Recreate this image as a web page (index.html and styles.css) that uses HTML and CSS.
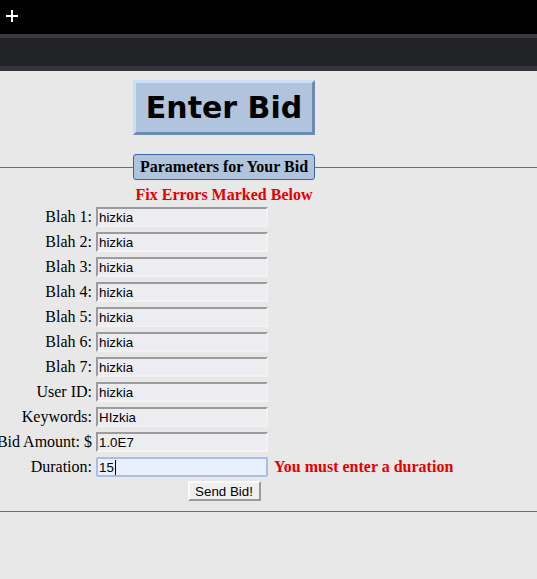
FILE: index.html
```html
<!DOCTYPE html>
<html>
<head>
<meta charset="utf-8">
<title>Enter Bid</title>
<link rel="stylesheet" href="styles.css">
</head>
<body>
<div class="topbar">
  <svg class="plus" width="12" height="12" viewBox="0 0 12 12"><path d="M6 0V12M0 6H12" stroke="#fff" stroke-width="2"/></svg>
</div>
<div class="tabbar"></div>
<main class="page">
  <div class="titlebox">Enter Bid</div>
  <form class="bidform">
    <fieldset class="params">
      <legend class="legend"><span class="legtext">Parameters for Your Bid</span></legend>
      <div class="content">
        <div class="errhead">Fix Errors Marked Below</div>
        <div class="rows">
          <label class="lbl">Blah 1:</label><input class="field" type="text" value="hizkia"><span></span>
          <label class="lbl">Blah 2:</label><input class="field" type="text" value="hizkia"><span></span>
          <label class="lbl">Blah 3:</label><input class="field" type="text" value="hizkia"><span></span>
          <label class="lbl">Blah 4:</label><input class="field" type="text" value="hizkia"><span></span>
          <label class="lbl">Blah 5:</label><input class="field" type="text" value="hizkia"><span></span>
          <label class="lbl">Blah 6:</label><input class="field" type="text" value="hizkia"><span></span>
          <label class="lbl">Blah 7:</label><input class="field" type="text" value="hizkia"><span></span>
          <label class="lbl">User ID:</label><input class="field" type="text" value="hizkia"><span></span>
          <label class="lbl">Keywords:</label><input class="field" type="text" value="HIzkia"><span></span>
          <label class="lbl">Bid Amount: $</label><input class="field" type="text" value="1.0E7"><span></span>
          <label class="lbl">Duration:</label><div class="field focused">15<span class="caret"></span></div><span class="err">You must enter a duration</span>
        </div>
        <div class="actions"><button class="send" type="button">Send Bid!</button></div>
      </div>
    </fieldset>
  </form>
</main>
</body>
</html>
```

FILE: styles.css
```css
html, body {
  margin: 0;
  padding: 0;
  background: #e8e8e8;
  font-family: "Liberation Serif", "Times New Roman", serif;
  font-size: 16px;
  color: #000;
  overflow: hidden;
}

.topbar {
  height: 34px;
  background: #000;
  display: flex;
  align-items: flex-start;
}

.plus {
  margin: 10px 0 0 6px;
  display: block;
}

.tabbar {
  height: 28px;
  background: #222326;
  border-top: 4px solid #3a3a3b;
  border-bottom: 5px solid #35363a;
}

.page {
  padding-top: 9px;
}

.titlebox {
  margin-left: 133px;
  width: 182px;
  height: 55px;
  box-sizing: border-box;
  background: #b0c4de;
  border-style: solid;
  border-width: 3px;
  border-color: #cadff5 #6d8bb0 #6d8bb0 #cadff5;
  font-family: "DejaVu Sans", Verdana, sans-serif;
  font-weight: bold;
  font-size: 30px;
  display: flex;
  align-items: center;
  justify-content: center;
  padding-bottom: 1px;
}

.bidform {
  margin: 0;
}

.params {
  margin: 19px 0 0 0;
  padding: 0 0 10px 133px;
  border: none;
  border-top: 1px solid #707070;
  border-bottom: 1px solid #707070;
  min-width: 0;
}

.legend {
  margin: 0;
  width: 182px;
  box-sizing: border-box;
  padding: 3px 0;
  text-align: left;
  background: #b0c4de;
  border: 1px solid #3a66a8;
  border-radius: 3px;
  font-weight: bold;
  line-height: 18px;
}

.legtext {
  display: block;
  width: 100%;
  text-align: center;
}

.content {
  margin-left: -133px;
  width: 448px;
  display: flex;
  flex-direction: column;
}

.errhead {
  text-align: center;
  color: #e60000;
  font-weight: bold;
  line-height: 18px;
  margin-top: 6px;
}

.rows {
  margin-top: 3px;
  display: grid;
  grid-template-columns: 92px 172px max-content;
  grid-auto-rows: 20px;
  row-gap: 5px;
  column-gap: 4px;
  align-items: center;
}

.lbl {
  justify-self: end;
  white-space: nowrap;
  line-height: 18px;
}

.field {
  box-sizing: border-box;
  width: 172px;
  height: 20px;
  margin: 0;
  padding: 1px 1px;
  font-family: "Liberation Sans", Arial, sans-serif;
  font-size: 13.33px;
  color: #000;
  background: #ececf1;
  border-style: solid;
  border-width: 2px;
  border-color: #9b9b9b #f2f2f2 #f2f2f2 #9b9b9b;
  outline: none;
}

.focused {
  background: #e8f0fe;
  border-color: #a7bfe4;
  border-radius: 2px;
  display: flex;
  align-items: center;
  padding-left: 1px;
}

.caret {
  display: inline-block;
  width: 1px;
  height: 15px;
  background: #000;
  margin-left: 1px;
}

.err {
  margin-left: 2px;
  color: #e60000;
  font-weight: bold;
  white-space: nowrap;
  line-height: 18px;
}

.actions {
  margin-top: 4px;
  display: flex;
  justify-content: center;
}

.send {
  width: 73px;
  height: 20px;
  box-sizing: border-box;
  padding: 0;
  font-family: "Liberation Sans", Arial, sans-serif;
  font-size: 13.33px;
  color: #000;
  background: #efefef;
  border-style: solid;
  border-width: 2px;
  border-color: #fafafa #9a9a9a #9a9a9a #fafafa;
}
```
